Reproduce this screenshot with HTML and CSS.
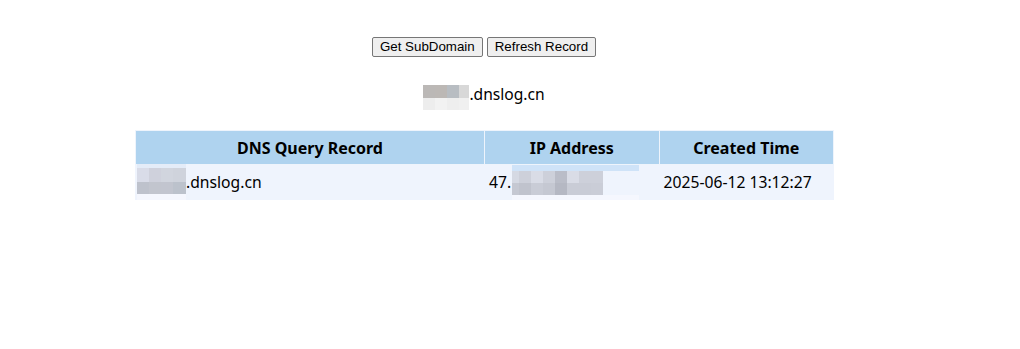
FILE: index.html
```html
<!DOCTYPE html>
<html lang="en">
<head>
<meta charset="utf-8">
<title>DNSLog</title>
<link rel="stylesheet" href="styles.css">
</head>
<body>
<div class="page">
  <div class="actions">
    <button class="btn" type="button">Get SubDomain</button>
    <button class="btn" type="button">Refresh Record</button>
  </div>
  <div class="domain"><span class="mosaic mosaic-domain"><i class="m1"></i><i class="m2"></i><i class="m3"></i><i class="m4"></i><i class="m5"></i><i class="m6"></i><i class="m7"></i><i class="m8"></i></span>.dnslog.cn</div>
  <table class="records">
    <thead>
      <tr>
        <th class="col-query">DNS Query Record</th>
        <th class="col-ip">IP Address</th>
        <th class="col-time">Created Time</th>
      </tr>
    </thead>
    <tbody>
      <tr>
        <td><span class="redact redact-query"><span class="mask mask-query">
          <span class="strip"></span>
          <span class="grid g4"><i style="background:#d9dce8"></i><i style="background:#cfd1dc"></i><i style="background:#d1d5de"></i><i style="background:#cfd3dc"></i><i style="background:#bec2cc"></i><i style="background:#c2c5ce"></i><i style="background:#c2c5cf"></i><i style="background:#bcc2cc"></i></span>
          <span class="tail"></span>
        </span></span>.dnslog.cn</td>
        <td>47.<span class="redact redact-ip"><span class="mask mask-ip">
          <span class="strip strip-ip"></span>
          <span class="grid g8"><i style="background:#d5d9e3"></i><i style="background:#cdd0da"></i><i style="background:#d9dce6"></i><i style="background:#cdd0da"></i><i style="background:#babdc8"></i><i style="background:#d9dce6"></i><i style="background:#cdd0da"></i><i style="background:#cdd0da"></i><i style="background:#c5c8d2"></i><i style="background:#c0c3cd"></i><i style="background:#c9ccd6"></i><i style="background:#c5c8d2"></i><i style="background:#b5b8c3"></i><i style="background:#c9ccd6"></i><i style="background:#c9ccd6"></i><i style="background:#cacdd7"></i></span>
          <span class="tail"></span>
        </span></span></td>
        <td>2025-06-12 13:12:27</td>
      </tr>
    </tbody>
  </table>
</div>
</body>
</html>
```

FILE: styles.css
```css
html, body {
  margin: 0;
  padding: 0;
  background: #ffffff;
}

body {
  font-family: "Noto Sans", "Open Sans", sans-serif;
  color: #000000;
}

.page {
  width: 968px;
  padding-top: 37px;
}

.actions {
  display: flex;
  justify-content: center;
  gap: 4px;
  height: 20px;
}

.btn {
  font-family: "Liberation Sans", Arial, sans-serif;
  font-size: 13.3333px;
  height: 20px;
  padding: 1px 7px;
  margin: 0;
  background: #efefef;
  color: #000;
  border: 1px solid #767676;
  border-radius: 2px;
  line-height: 16px;
}

.domain {
  margin-top: 26px;
  text-align: center;
  font-size: 15.6px;
  line-height: 22px;
  height: 22px;
}

.mosaic-domain {
  display: inline-grid;
  grid-template-columns: 12px 12px 12px 10px;
  grid-template-rows: 13px 12px;
  vertical-align: top;
  margin-top: 2px;
  height: 25px;
}

.mosaic-domain i { display: block; }
.mosaic-domain .m1 { background: #bbb8b6; }
.mosaic-domain .m2 { background: #bcb8b5; }
.mosaic-domain .m3 { background: #b8bdc2; }
.mosaic-domain .m4 { background: #d8d8d8; }
.mosaic-domain .m5 { background: #ededed; }
.mosaic-domain .m6 { background: #f2f2f2; }
.mosaic-domain .m7 { background: #eeeeee; }
.mosaic-domain .m8 { background: #f0f0f0; }

.records {
  margin: 25px 0 0 135px;
  width: 699px;
  border-collapse: collapse;
  table-layout: fixed;
  font-size: 15.7px;
  border: 1px solid #eef3fb;
}

.col-query { width: 348px; }
.col-ip { width: 174px; }
.col-time { width: 174px; }

.records th {
  background: #afd3ef;
  font-weight: 700;
  font-size: 16px;
  text-align: center;
  height: 34px;
  padding: 0 4px;
  border: 1px solid #eef4fc;
  line-height: 22px;
  box-sizing: border-box;
}

.records td {
  background: #eff4fd;
  text-align: left;
  height: 34px;
  padding: 0 4px;
  border: 1px solid #eff4fd;
  line-height: 22px;
  white-space: nowrap;
  overflow: visible;
}

.records td:first-child {
  padding-left: 0;
}

.redact {
  position: relative;
  display: inline-block;
  vertical-align: top;
  height: 22px;
}

.redact-query { width: 50px; }
.redact-ip { width: 1px; }

.mask {
  position: absolute;
  display: flex;
  flex-direction: column;
}

.mask-query {
  left: 1px;
  top: -7px;
  width: 49px;
}

.mask-ip {
  left: 1px;
  top: -6px;
  width: 127px;
}

.strip {
  display: block;
  height: 4px;
  background: #e4ecf8;
}

.strip-ip {
  height: 6px;
  background: #cfe3f8;
}

.grid {
  display: grid;
  grid-auto-rows: 12px;
}

.grid i { display: block; }

.g4 {
  grid-template-columns: 12px 12px 12px 13px;
  grid-template-rows: 14px 12px;
}

.g8 {
  grid-template-columns: 7px 12px 12px 12px 12px 12px 12px 12px;
  width: 91px;
}

.tail {
  display: block;
  height: 12px;
  background: #f5f7fe;
}
```
